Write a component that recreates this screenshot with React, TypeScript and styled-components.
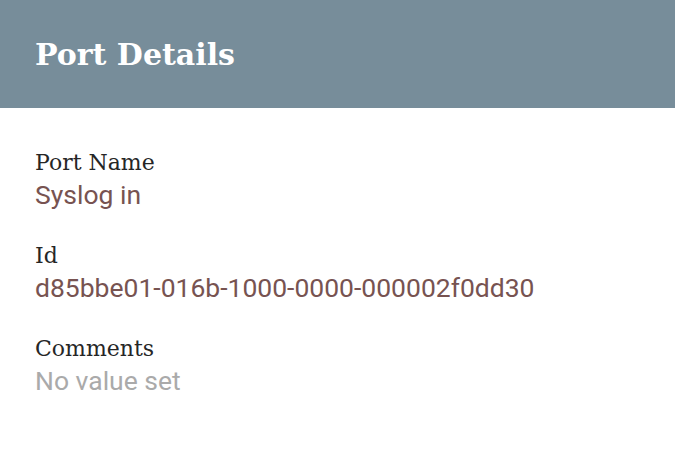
import styled, { createGlobalStyle } from 'styled-components';

const GlobalStyle = createGlobalStyle`
  html, body {
    margin: 0;
    padding: 0;
    background: #ffffff;
  }
`;

type Field = {
  label: string;
  value?: string;
};

const fields: Field[] = [
  { label: 'Port Name', value: 'Syslog in' },
  { label: 'Id', value: 'd85bbe01-016b-1000-0000-000002f0dd30' },
  { label: 'Comments' },
];

const App = () => (
  <>
    <GlobalStyle />
    <StyledDialog>
      <StyledHeader>
        <StyledTitle>Port Details</StyledTitle>
      </StyledHeader>
      <StyledBody>
        {fields.map((field) => (
          <StyledField key={field.label}>
            <StyledLabel>{field.label}</StyledLabel>
            <StyledValue $empty={!field.value}>{field.value ?? 'No value set'}</StyledValue>
          </StyledField>
        ))}
      </StyledBody>
    </StyledDialog>
  </>
);

const StyledDialog = styled.div`
  width: 675px;
  height: 462px;
  background: #ffffff;
`;

const StyledHeader = styled.div`
  height: 108px;
  background: #778d9a;
  display: flex;
  align-items: center;
  padding: 0 35px;
  box-sizing: border-box;
`;

const StyledTitle = styled.h1`
  margin: 0;
  color: #ffffff;
  font-family: 'Roboto Slab', 'DejaVu Serif', serif;
  font-weight: bold;
  font-size: 30px;
`;

const StyledBody = styled.div`
  display: flex;
  flex-direction: column;
  gap: 30px;
  padding: 40px 35px 0;
`;

const StyledField = styled.div`
  display: flex;
  flex-direction: column;
`;

const StyledLabel = styled.div`
  color: #262626;
  font-family: 'Roboto Slab', 'DejaVu Serif', serif;
  font-size: 22px;
  line-height: 30px;
`;

const StyledValue = styled.div<{ $empty: boolean }>`
  color: ${({ $empty }) => ($empty ? '#aaaaaa' : '#775351')};
  font-family: Roboto, sans-serif;
  font-size: 26.5px;
  line-height: 33px;
`;

export default App;
